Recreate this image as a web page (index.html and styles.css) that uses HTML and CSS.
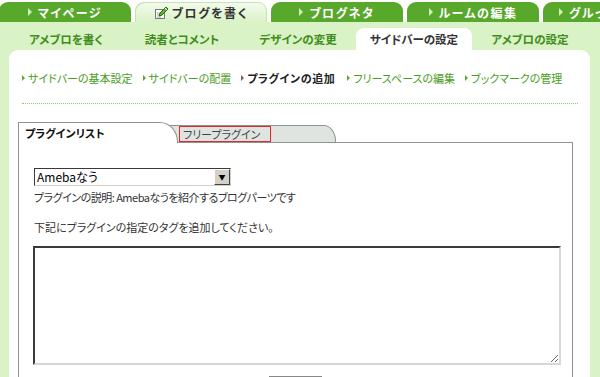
FILE: index.html
```html
<!DOCTYPE html>
<html lang="ja">
<head>
  <meta charset="UTF-8">
  <meta name="viewport" content="width=device-width, initial-scale=1.0">
  <title>サイドバーの設定 - プラグインの追加</title>
  <link rel="stylesheet" href="styles.css">
</head>
<body>
  <ul class="gnav">
    <li class="gtab"><span class="tri"></span>マイページ</li>
    <li class="gtab current">
      <svg class="pen" width="15" height="15" viewBox="0 0 15 15">
        <rect x="1.5" y="4.5" width="9" height="9" fill="#fff" stroke="#777"/>
        <path d="M3 8h5M3 10h5M3 12h4" stroke="#aaa"/>
        <path d="M5 11l1-3 6-6 2 2-6 6z" fill="#5cb82e" stroke="#2f6a12"/>
        <path d="M11 3l2 2" stroke="#fff"/>
      </svg>ブログを書く</li>
    <li class="gtab"><span class="tri"></span>ブログネタ</li>
    <li class="gtab"><span class="tri"></span>ルームの編集</li>
    <li class="gtab last"><span class="tri"></span>グルっぽ</li>
  </ul>

  <div class="wrap">
    <ul class="subnav">
      <li>アメブロを書く</li>
      <li>読者とコメント</li>
      <li>デザインの変更</li>
      <li class="current">サイドバーの設定</li>
      <li>アメブロの設定</li>
    </ul>

    <div class="panel">
      <ul class="links">
        <li>サイドバーの基本設定</li>
        <li>サイドバーの配置</li>
        <li class="current">プラグインの追加</li>
        <li>フリースペースの編集</li>
        <li>ブックマークの管理</li>
      </ul>

      <div class="tabs">
        <div class="tab tab-list">プラグインリスト</div>
        <div class="tab tab-free"><span class="mark">フリープラグイン</span></div>
      </div>

      <div class="tabbox">
        <div class="select">
          <span class="select-value">Amebaなう</span>
          <span class="select-btn">▼</span>
        </div>
        <p class="desc">プラグインの説明: Amebaなうを紹介するブログパーツです</p>
        <p class="note">下記にプラグインの指定のタグを追加してください。</p>
        <textarea class="code"></textarea>
        <div class="actions">
          <button class="addBtn" aria-label="追加"></button>
        </div>
      </div>
    </div>
  </div>
</body>
</html>
```

FILE: styles.css
```css
html, body{
  margin:0;
  overflow:hidden;
  background:#fff;
}
body{
  font-family: "Noto Sans CJK JP", sans-serif;
  font-size:12px;
  color:#333;
  font-feature-settings: "palt";
}

/* global tabs */
.gnav{
  display:flex;
  gap:4px;
  list-style:none;
  margin:0 0 0 -1px;
  padding:2px 0 0;
  white-space:nowrap;
}
.gtab{
  flex:0 0 132px;
  height:20px;
  display:flex;
  align-items:center;
  justify-content:center;
  gap:6px;
  background:#58a82b;
  border-radius:9px 9px 0 0;
  color:#fff;
  font-weight:bold;
  font-size:12px;
  letter-spacing:1.5px;
}
.gtab .tri{
  border-left:4px solid #d2efbd;
  border-top:4px solid transparent;
  border-bottom:4px solid transparent;
}
.gtab.current{
  background:linear-gradient(#f4fbef, #d9f2c6);
  box-shadow: inset 1px 1px 0 #c3e6aa, inset -1px 0 0 #c3e6aa;
  color:#333;
  gap:3px;
}
.gtab.last{
  justify-content:flex-start;
  padding-left:16px;
}

/* sub tabs */
.wrap{
  background:#d9f2c6;
  padding:0 10px 0 9px;
}
.subnav{
  display:flex;
  list-style:none;
  margin:0 0 0 -1px;
  padding:6px 0 0;
}
.subnav li{
  width:116px;
  height:22px;
  line-height:22px;
  text-align:center;
  font-weight:bold;
  font-size:11.5px;
  color:#3f8d1b;
  border-radius:8px 8px 0 0;
}
.subnav li.current{
  background:#fff;
  color:#333;
}

/* panel */
.panel{
  background:#fff;
  border-radius:9px 9px 0 0;
  padding:21px 17px 40px 9px;
}
.links{
  display:flex;
  list-style:none;
  margin:0 -5px 0 4px;
  padding:0 0 18px;
  border-bottom:1px dotted #93cc70;
  font-size:11px;
  line-height:14px;
  color:#4a9d24;
  white-space:nowrap;
}
.links li{
  flex:none;
  display:flex;
  align-items:center;
  gap:3px;
  margin-right:10px;
}
.links li::before{
  content:"";
  border-left:3px solid #5aab2c;
  border-top:3px solid transparent;
  border-bottom:3px solid transparent;
}
.links li.current{
  color:#222;
  font-weight:bold;
  letter-spacing:0.6px;
  margin-right:12px;
}
.links li.current::before{
  border-left-color:#666;
}

/* plugin tabs */
.tabs{
  display:flex;
  align-items:flex-end;
  height:20px;
  margin-top:18px;
}
.tab{
  box-sizing:border-box;
  border:1px solid #8b9691;
  border-bottom:0;
  font-size:11px;
  line-height:14px;
}
.tab-list{
  position:relative;
  z-index:1;
  width:160px;
  height:21px;
  margin-bottom:-1px;
  padding:3px 0 0 6px;
  background:#fff;
  border-radius:0 18px 0 0 / 0 20px 0 0;
  font-weight:bold;
  color:#111;
}
.tab-free{
  width:176px;
  height:17px;
  margin-left:-18px;
  padding:0 0 0 19px;
  background:#dfe4e1;
  border-left:0;
  border-radius:0 12px 0 0 / 0 16px 0 0;
  color:#444;
}
.mark{
  display:inline-block;
  height:14px;
  line-height:14px;
  padding:0 10px 0 3px;
  border:1px solid #e02a2a;
}

.tabbox{
  border:1px solid #8b9691;
  padding:25px 15px 0;
}

.select{
  display:flex;
  box-sizing:border-box;
  width:197px;
  height:18px;
  border:1px solid;
  border-color:#3a3a3a #d4d0c8 #d4d0c8 #3a3a3a;
  background:#fff;
  font-size:12px;
  line-height:16px;
}
.select-value{
  padding-left:2px;
  color:#000;
}
.select-btn{
  margin-left:auto;
  width:14px;
  display:flex;
  align-items:center;
  justify-content:center;
  background:#d4d0c8;
  border:1px solid;
  border-color:#fff #404040 #404040 #fff;
  font-size:7px;
  color:#000;
}

.desc, .note{
  margin:0;
  line-height:14px;
  font-size:11px;
}
.desc{
  margin-top:4px;
  letter-spacing:-0.5px;
}
.note{
  margin-top:16px;
}

.code{
  display:block;
  box-sizing:border-box;
  width:528px;
  height:119px;
  margin:12px 0 0 -1px;
  border:2px solid;
  border-color:#3a3a3a #d8d8d8 #d8d8d8 #3a3a3a;
  background:#fff;
}

.actions{
  display:flex;
  justify-content:center;
  padding:11px 0 10px;
}
.addBtn{
  width:53px;
  height:22px;
  background:#f0f0f0;
  border:1px solid #888;
}
```
